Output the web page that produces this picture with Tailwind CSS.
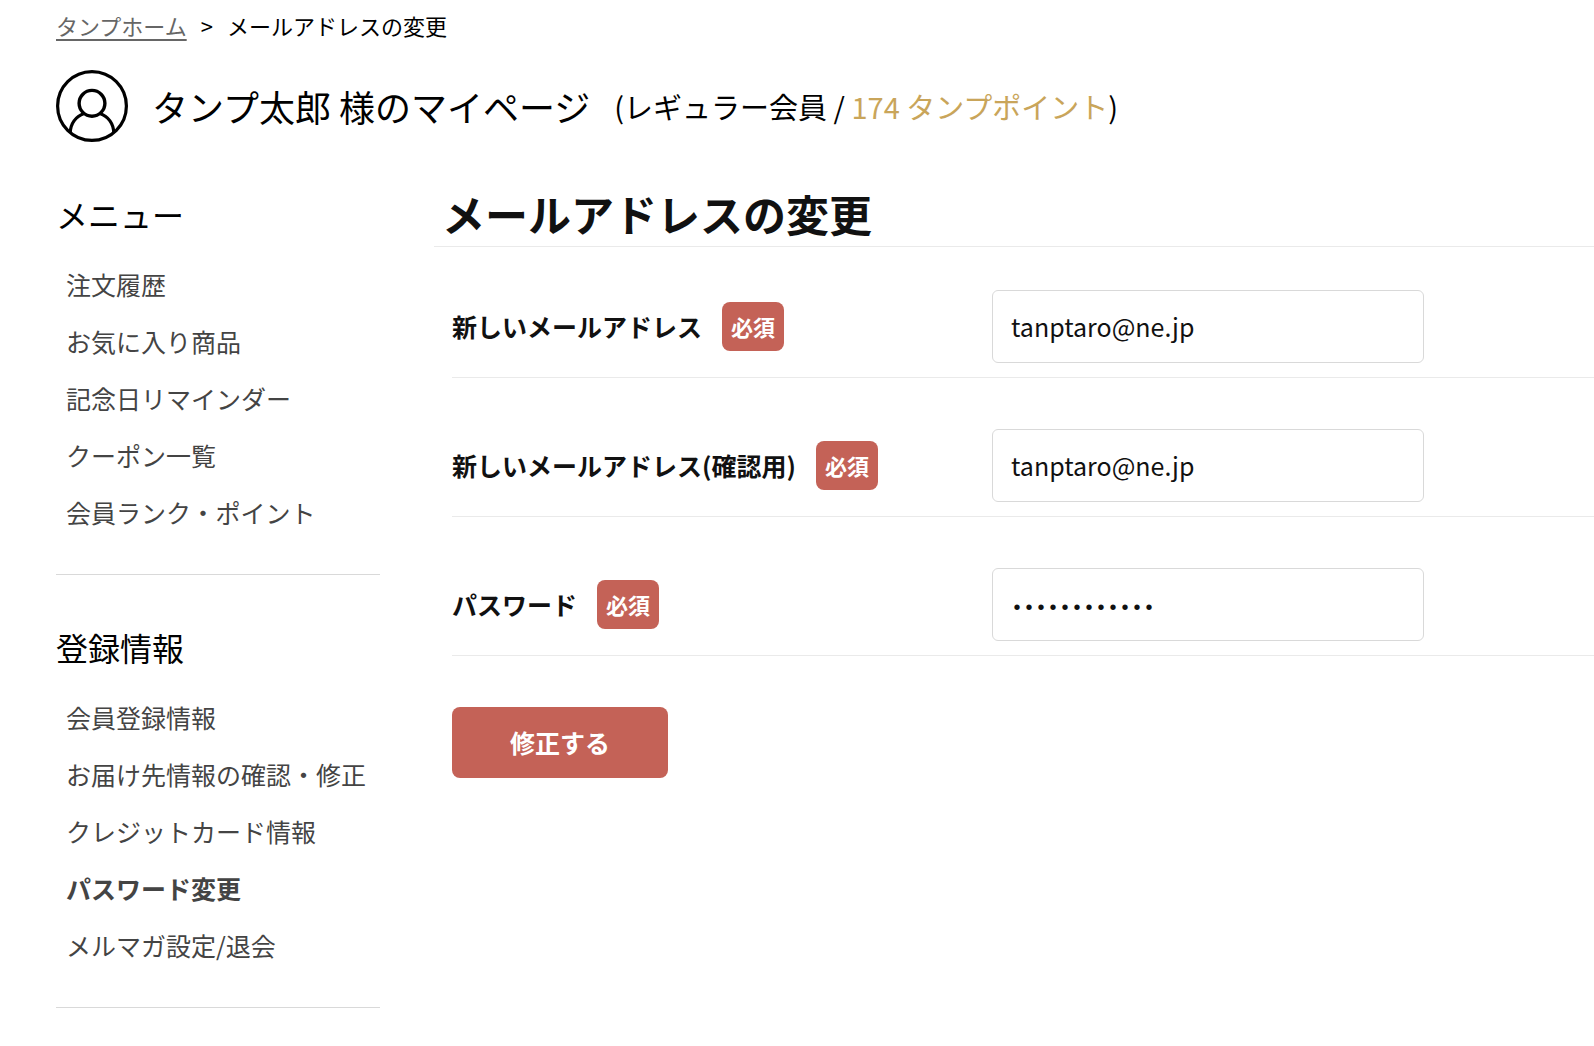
<!DOCTYPE html>
<html lang="ja">
<head>
  <meta charset="UTF-8">
  <meta name="viewport" content="width=device-width, initial-scale=1.0">
  <title>メールアドレスの変更</title>
  <script src="https://cdn.jsdelivr.net/npm/@tailwindcss/browser@4"></script>
</head>
<body class="bg-white font-['Noto_Sans_CJK_JP',sans-serif] text-black">
  <header class="pl-14">
    <nav class="flex items-center gap-[14px] pt-2 text-[22px] leading-[34px]" aria-label="パンくず">
      <a href="#" class="text-[#666] underline decoration-2 underline-offset-4">タンプホーム</a>
      <span>&gt;</span>
      <span>メールアドレスの変更</span>
    </nav>
    <div class="mt-7 flex items-center">
      <svg class="size-[72px] shrink-0" viewBox="0 0 72 72" fill="none" stroke="currentColor" stroke-width="3.2" aria-hidden="true">
        <circle cx="36" cy="36" r="34.4"/>
        <circle cx="36" cy="33.3" r="12.9" stroke-width="3.4"/>
        <path d="M28 43.5C19.5 46.5 14.5 54 14.3 62.5M44 43.5C52.5 46.5 57.5 54 57.7 62.5"/>
      </svg>
      <p class="ml-6 text-4xl leading-[72px]">タンプ太郎 様のマイページ</p>
      <p class="ml-6 text-[29px] leading-[72px]">(レギュラー会員 / <span class="text-[#c9a55a]">174 タンプポイント</span>)</p>
    </div>
  </header>

  <div class="mt-10 flex pl-14">
    <aside class="w-[324px] shrink-0">
      <section class="border-b border-[#d9d9d9] pb-[33px]">
        <h2 class="text-[32px] leading-[64px]">メニュー</h2>
        <ul class="mt-[10px] pl-[10px] text-[25px] leading-[57px] text-[#444]">
          <li><a href="#">注文履歴</a></li>
          <li><a href="#">お気に入り商品</a></li>
          <li><a href="#">記念日リマインダー</a></li>
          <li><a href="#">クーポン一覧</a></li>
          <li><a href="#">会員ランク・ポイント</a></li>
        </ul>
      </section>
      <section class="mt-10 border-b border-[#d9d9d9] pb-[33px]">
        <h2 class="text-[32px] leading-[64px]">登録情報</h2>
        <ul class="mt-[10px] pl-[10px] text-[25px] leading-[57px] text-[#444]">
          <li><a href="#">会員登録情報</a></li>
          <li><a href="#">お届け先情報の確認・修正</a></li>
          <li><a href="#">クレジットカード情報</a></li>
          <li><a href="#" class="font-bold">パスワード変更</a></li>
          <li><a href="#">メルマガ設定/退会</a></li>
        </ul>
      </section>
    </aside>

    <main class="ml-[54px] flex-1 text-[#111]">
      <h1 class="border-b border-[#eaeaea] pb-[2px] pl-2 text-[43px] leading-[62px] font-bold">メールアドレスの変更</h1>
      <form class="flex flex-col gap-[51px] pt-[43px] pl-[18px]">
        <div class="grid grid-cols-[540px_1fr] items-center border-b border-[#eaeaea] pb-[14px]">
          <label for="email" class="flex items-center text-[25px] font-bold">新しいメールアドレス<span class="ml-5 rounded-lg bg-[#c46257] px-[9px] text-[22px] leading-[49px] text-white">必須</span></label>
          <input id="email" type="email" value="tanptaro@ne.jp" class="h-[73px] w-[432px] max-w-full rounded-md border border-[#d9d9d9] px-[18px] pb-[2px] text-[25px]">
        </div>
        <div class="grid grid-cols-[540px_1fr] items-center border-b border-[#eaeaea] pb-[14px]">
          <label for="email-confirm" class="flex items-center text-[25px] font-bold">新しいメールアドレス(確認用)<span class="ml-5 rounded-lg bg-[#c46257] px-[9px] text-[22px] leading-[49px] text-white">必須</span></label>
          <input id="email-confirm" type="email" value="tanptaro@ne.jp" class="h-[73px] w-[432px] max-w-full rounded-md border border-[#d9d9d9] px-[18px] pb-[2px] text-[25px]">
        </div>
        <div class="grid grid-cols-[540px_1fr] items-center border-b border-[#eaeaea] pb-[14px]">
          <label for="password" class="flex items-center text-[25px] font-bold">パスワード<span class="ml-5 rounded-lg bg-[#c46257] px-[9px] text-[22px] leading-[49px] text-white">必須</span></label>
          <input id="password" type="password" value="tanptaro1234" class="h-[73px] w-[432px] max-w-full rounded-md border border-[#d9d9d9] px-[18px] pt-2 font-['Liberation_Mono',monospace] text-xl">
        </div>
        <button type="submit" class="h-[71px] w-[216px] rounded-lg bg-[#c46257] text-[25px] font-bold text-white">修正する</button>
      </form>
    </main>
  </div>
</body>
</html>
